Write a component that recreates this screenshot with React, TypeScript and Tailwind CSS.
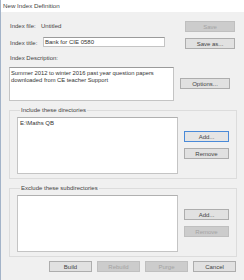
import React from 'react';

interface BtnProps {
  label: string;
  disabled?: boolean;
  focused?: boolean;
  className?: string;
}

const Btn: React.FC<BtnProps> = ({ label, disabled, focused, className = '' }) => (
  <div
    className={`h-[11px] flex items-center justify-center border text-[6px] leading-none ${
      disabled
        ? 'bg-[#cccccc] border-[#bfbfbf] text-[#a3a3a3]'
        : focused
        ? 'bg-[#e5e5e5] border-[#4a8ad8] text-[#444]'
        : 'bg-[#e1e1e1] border-[#adadad] text-[#444]'
    } ${className}`}
  >
    {label}
  </div>
);

interface GroupProps {
  title: string;
  items: string[];
  removeDisabled?: boolean;
  className?: string;
}

const DirGroup: React.FC<GroupProps> = ({ title, items, removeDisabled, className = '' }) => (
  <fieldset className={`border border-[#dcdcdc] mr-[7px] px-[7px] pb-[3px] ${className}`}>
    <legend className="ml-[3px] px-[1px] text-[6px] leading-[7px] text-[#444]">{title}</legend>
    <div className="flex">
      <div className="w-[161px] h-[57px] mt-[3px] bg-white border border-[#c4c4c4] border-t-[#b0b0b0] px-[2px] pt-[1px]">
        {items.map((it) => (
          <div key={it} className="text-[6px] leading-[8px] text-[#333]">
            {it}
          </div>
        ))}
      </div>
      <div className="flex flex-col gap-[6px] ml-[6px] mt-[17px]">
        <Btn label="Add..." focused={!removeDisabled} className="w-[45px]" />
        <Btn label="Remove" disabled={removeDisabled} className="w-[45px]" />
      </div>
    </div>
  </fieldset>
);

export default function App() {
  return (
    <div
      className="w-[244px] h-[280px] bg-[#f0f0f0] border-l border-[#a3b3c8] flex flex-col overflow-hidden text-[#444]"
      style={{ fontFamily: '"Liberation Sans", Arial, sans-serif' }}
    >
      <div className="h-[12px] bg-white flex items-center pl-[2px] text-[6.2px] text-[#444]">
        New Index Definition
      </div>

      <div className="flex flex-col pl-[8px]">
        <div className="flex items-center mt-[9px] pl-[1px] text-[6px]">
          <span className="w-[31px]">Index file:</span>
          <span>Untitled</span>
          <Btn label="Save" disabled className="w-[50px] ml-auto mr-[9px]" />
        </div>

        <div className="flex items-start mt-[5px] pl-[1px] text-[6px]">
          <span className="w-[33px] mt-[2px]">Index title:</span>
          <div className="w-[122px] h-[10px] bg-white border border-[#c4c4c4] border-t-[#9a9a9a] flex items-center pl-[1px] text-[6px] text-[#333]">
            Bank for CIE 0580
          </div>
          <Btn label="Save as..." className="w-[50px] ml-auto mr-[9px] mt-[1px]" />
        </div>

        <div className="mt-[6px] pl-[1px] text-[6px] leading-[7px]">Index Description:</div>

        <div className="flex items-start mt-[5px]">
          <div className="w-[165px] h-[34px] bg-white border border-[#c4c4c4] border-t-[#9a9a9a] px-[1px] pt-[2px] text-[5.8px] leading-[7px] text-[#333]">
            Summer 2012 to winter 2016 past year question papers downloaded from CE teacher Support
          </div>
          <Btn label="Options..." className="w-[50px] ml-[6px] mt-[11px]" />
        </div>

        <DirGroup title="Include these directories" items={['E:\\Maths QB']} className="mt-[6px] h-[72px]" />
        <DirGroup title="Exclude these subdirectories" items={[]} removeDisabled className="mt-[6px] h-[72px]" />

        <div className="flex gap-[5px] mt-[4px] pl-[40px]">
          <Btn label="Build" className="w-[43px]" />
          <Btn label="Rebuild" disabled className="w-[43px]" />
          <Btn label="Purge" disabled className="w-[43px]" />
          <Btn label="Cancel" className="w-[43px]" />
        </div>
      </div>
    </div>
  );
}
